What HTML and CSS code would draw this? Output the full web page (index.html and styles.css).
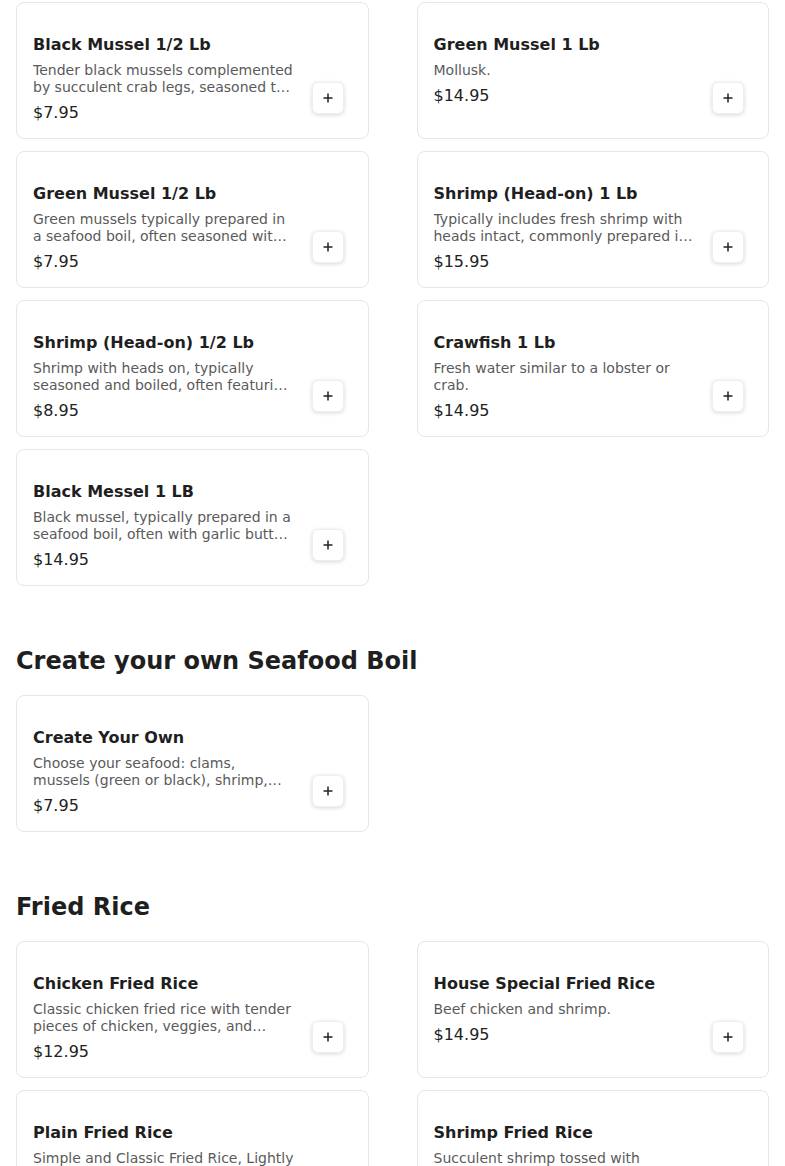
FILE: index.html
```html
<!DOCTYPE html>
<html lang="en">
<head>
<meta charset="utf-8">
<title>Menu</title>
<link rel="stylesheet" href="styles.css">
</head>
<body>
<main class="menu">
  <section class="section section-first">
    <div class="grid">
      <div class="card">
        <div class="info">
          <h3 class="name">Black Mussel 1/2 Lb</h3>
          <p class="desc">Tender black mussels complemented by succulent crab legs, seasoned to perfection with our house blend of spices.</p>
          <div class="price">$7.95</div>
        </div>
        <div class="side"><button class="add" aria-label="Add"><svg viewBox="0 0 12 12" width="12" height="12"><path d="M6 1.5v9M1.5 6h9" stroke="#222" stroke-width="1.5" fill="none"/></svg></button></div>
      </div>
      <div class="card">
        <div class="info">
          <h3 class="name">Green Mussel 1 Lb</h3>
          <p class="desc">Mollusk.</p>
          <div class="price">$14.95</div>
        </div>
        <div class="side"><button class="add" aria-label="Add"><svg viewBox="0 0 12 12" width="12" height="12"><path d="M6 1.5v9M1.5 6h9" stroke="#222" stroke-width="1.5" fill="none"/></svg></button></div>
      </div>
      <div class="card">
        <div class="info">
          <h3 class="name">Green Mussel 1/2 Lb</h3>
          <p class="desc">Green mussels typically prepared in a seafood boil, often seasoned with cajun spices, garlic and butter.</p>
          <div class="price">$7.95</div>
        </div>
        <div class="side"><button class="add" aria-label="Add"><svg viewBox="0 0 12 12" width="12" height="12"><path d="M6 1.5v9M1.5 6h9" stroke="#222" stroke-width="1.5" fill="none"/></svg></button></div>
      </div>
      <div class="card">
        <div class="info">
          <h3 class="name">Shrimp (Head-on) 1 Lb</h3>
          <p class="desc">Typically includes fresh shrimp with heads intact, commonly prepared in a seafood boil with spices.</p>
          <div class="price">$15.95</div>
        </div>
        <div class="side"><button class="add" aria-label="Add"><svg viewBox="0 0 12 12" width="12" height="12"><path d="M6 1.5v9M1.5 6h9" stroke="#222" stroke-width="1.5" fill="none"/></svg></button></div>
      </div>
      <div class="card">
        <div class="info">
          <h3 class="name">Shrimp (Head-on) 1/2 Lb</h3>
          <p class="desc">Shrimp with heads on, typically seasoned and boiled, often featuring cajun spices and garlic butter.</p>
          <div class="price">$8.95</div>
        </div>
        <div class="side"><button class="add" aria-label="Add"><svg viewBox="0 0 12 12" width="12" height="12"><path d="M6 1.5v9M1.5 6h9" stroke="#222" stroke-width="1.5" fill="none"/></svg></button></div>
      </div>
      <div class="card">
        <div class="info">
          <h3 class="name">Crawfish 1 Lb</h3>
          <p class="desc">Fresh water similar to a lobster or crab.</p>
          <div class="price">$14.95</div>
        </div>
        <div class="side"><button class="add" aria-label="Add"><svg viewBox="0 0 12 12" width="12" height="12"><path d="M6 1.5v9M1.5 6h9" stroke="#222" stroke-width="1.5" fill="none"/></svg></button></div>
      </div>
      <div class="card">
        <div class="info">
          <h3 class="name">Black Messel 1 LB</h3>
          <p class="desc">Black mussel, typically prepared in a seafood boil, often with garlic butter and cajun seasoning.</p>
          <div class="price">$14.95</div>
        </div>
        <div class="side"><button class="add" aria-label="Add"><svg viewBox="0 0 12 12" width="12" height="12"><path d="M6 1.5v9M1.5 6h9" stroke="#222" stroke-width="1.5" fill="none"/></svg></button></div>
      </div>
    </div>
  </section>

  <section class="section">
    <h2 class="section-title">Create your own Seafood Boil</h2>
    <div class="grid">
      <div class="card">
        <div class="info">
          <h3 class="name">Create Your Own</h3>
          <p class="desc">Choose your seafood: clams, mussels (green or black), shrimp, crawfish, and pick your sauce and spice level.</p>
          <div class="price">$7.95</div>
        </div>
        <div class="side"><button class="add" aria-label="Add"><svg viewBox="0 0 12 12" width="12" height="12"><path d="M6 1.5v9M1.5 6h9" stroke="#222" stroke-width="1.5" fill="none"/></svg></button></div>
      </div>
    </div>
  </section>

  <section class="section">
    <h2 class="section-title">Fried Rice</h2>
    <div class="grid">
      <div class="card">
        <div class="info">
          <h3 class="name">Chicken Fried Rice</h3>
          <p class="desc">Classic chicken fried rice with tender pieces of chicken, veggies, and scrambled egg.</p>
          <div class="price">$12.95</div>
        </div>
        <div class="side"><button class="add" aria-label="Add"><svg viewBox="0 0 12 12" width="12" height="12"><path d="M6 1.5v9M1.5 6h9" stroke="#222" stroke-width="1.5" fill="none"/></svg></button></div>
      </div>
      <div class="card">
        <div class="info">
          <h3 class="name">House Special Fried Rice</h3>
          <p class="desc">Beef chicken and shrimp.</p>
          <div class="price">$14.95</div>
        </div>
        <div class="side"><button class="add" aria-label="Add"><svg viewBox="0 0 12 12" width="12" height="12"><path d="M6 1.5v9M1.5 6h9" stroke="#222" stroke-width="1.5" fill="none"/></svg></button></div>
      </div>
      <div class="card">
        <div class="info">
          <h3 class="name">Plain Fried Rice</h3>
          <p class="desc">Simple and Classic Fried Rice, Lightly seasoned with soy sauce, egg and green onion.</p>
          <div class="price">$9.95</div>
        </div>
        <div class="side"><button class="add" aria-label="Add"><svg viewBox="0 0 12 12" width="12" height="12"><path d="M6 1.5v9M1.5 6h9" stroke="#222" stroke-width="1.5" fill="none"/></svg></button></div>
      </div>
      <div class="card">
        <div class="info">
          <h3 class="name">Shrimp Fried Rice</h3>
          <p class="desc">Succulent shrimp tossed with flavorful fried rice, egg, peas and carrots.</p>
          <div class="price">$13.95</div>
        </div>
        <div class="side"><button class="add" aria-label="Add"><svg viewBox="0 0 12 12" width="12" height="12"><path d="M6 1.5v9M1.5 6h9" stroke="#222" stroke-width="1.5" fill="none"/></svg></button></div>
      </div>
    </div>
  </section>
</main>
</body>
</html>
```

FILE: styles.css
```css
* { box-sizing: border-box; }

html, body {
  margin: 0;
  padding: 0;
  background: #ffffff;
}

body {
  font-family: "DejaVu Sans", "Liberation Sans", sans-serif;
  color: #1f1f1f;
}

.menu {
  display: flex;
  flex-direction: column;
  gap: 59px;
  padding: 2px 16px 40px;
}

.section-title {
  margin: 0 0 18px;
  font-size: 24px;
  line-height: 32px;
  font-weight: 700;
  color: #1f1f1f;
}

.grid {
  display: grid;
  grid-template-columns: 1fr 1fr;
  column-gap: 48px;
  row-gap: 12px;
}

.card {
  display: flex;
  justify-content: space-between;
  height: 137px;
  padding: 16px;
  border: 1px solid #e6e6e6;
  border-radius: 8px;
  background: #fff;
}

.info {
  width: 261px;
  padding-top: 14px;
  min-width: 0;
}

.name {
  margin: 0;
  font-size: 16px;
  line-height: 24px;
  font-weight: 700;
  color: #1f1f1f;
}

.desc {
  margin: 5px 0 0;
  font-size: 14px;
  line-height: 17px;
  color: #5a5a5a;
  display: -webkit-box;
  -webkit-line-clamp: 2;
  -webkit-box-orient: vertical;
  overflow: hidden;
}

.price {
  margin-top: 5px;
  font-size: 16px;
  line-height: 24px;
  color: #222;
}

.side {
  position: relative;
  width: 48px;
  height: 103px;
  flex: none;
}

.add {
  position: absolute;
  right: 8px;
  bottom: 8px;
  width: 32px;
  height: 32px;
  padding: 0;
  display: flex;
  align-items: center;
  justify-content: center;
  background: #fff;
  border: 1px solid #efefef;
  border-radius: 6px;
  box-shadow: 0 1px 4px rgba(0, 0, 0, 0.16);
  cursor: pointer;
}
```
